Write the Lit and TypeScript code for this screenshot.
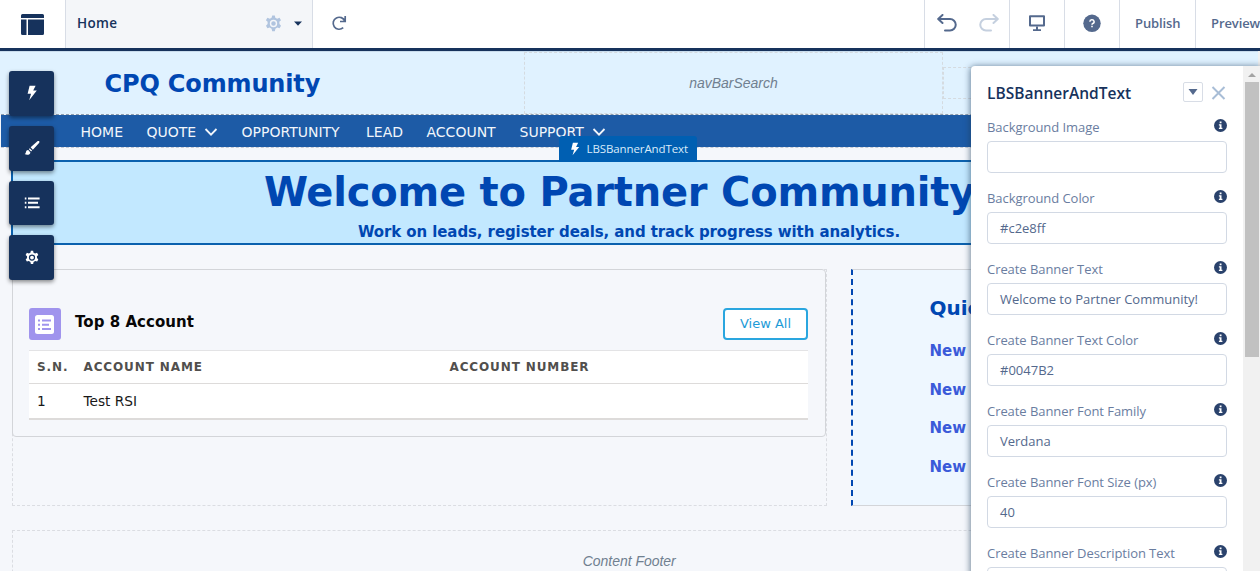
import { LitElement, html, css, svg, nothing } from "lit";
import { customElement } from "lit/decorators.js";

const GEAR = svg`<path fill-rule="evenodd" d="M8.6 1h2.8l.5 2.5 1.9.9 2.5-1 1.6 2.7-1.8 1.6.2 2.3 1.6 1.9-1.5 2.6-2.4-.7-2 1.200-.6 2.600h-2.800l-.6-2.600-2-1.200-2.400.7-1.500-2.600 1.700-1.800v-2.400l-1.800-1.600 1.600-2.700 2.500 1 1.900-.9zM10 5.600a3.900 3.900 0 1 0 0 7.800 3.900 3.900 0 0 0 0-7.800zM10 7.100a2.400 2.400 0 1 1 0 4.800 2.400 2.400 0 0 1 0-4.800z"/>`;
const BOLT = svg`<path d="M7 1h7.500l-3 6H16L6.500 19l2.300-8H4.500z"/>`;
const BRUSH = svg`<path d="M19 1.500c-.6-.6-1.500-.4-2.200.1L8.300 9.200l2.800 2.900 7.700-8.500c.6-.7.700-1.600.2-2.100zM7.200 10.300c-.5.4-.8 1-.9 1.500l2.300 2.400c.6-.1 1.100-.4 1.600-.9zM5.300 12.500c-2.200 0-2.800 1.700-3 3.200-.1 1-.6 1.500-1.500 1.900 2.300 1.600 7 1.400 7.200-2.100z"/>`;
const LIST = svg`<path d="M1 3h2v2.500H1zM5 3h14.500v2.500H5zM1 8.500h2V11H1zM5 8.500h12.500V11H5zM1 14h2v2.500H1zM5 14h14.500v2.500H5z"/>`;

const FIELDS: [string, string][] = [
  ["Background Image", ""],
  ["Background Color", "#c2e8ff"],
  ["Create Banner Text", "Welcome to Partner Community!"],
  ["Create Banner Text Color", "#0047B2"],
  ["Create Banner Font Family", "Verdana"],
  ["Create Banner Font Size (px)", "40"],
  ["Create Banner Description Text", ""],
];

@customElement("builder-header")
class BuilderHeader extends LitElement {
  static styles = css`
    :host { display: flex; height: 48px; background: #fff; color: #54698d;
      font: 600 13px/46px "Open Sans", sans-serif; border-bottom: 3px solid #16325c; box-sizing: content-box; white-space: nowrap; }
    .cell { box-sizing: border-box; height: 48px; border-left: 1px solid #d8dde6; display: flex; align-items: center; flex: none; padding-bottom: 2px; }
    .logo { width: 65px; border: 0; justify-content: center; padding-bottom: 0; padding-right: 1px; }
    .page { width: 247px; background: #f4f6f9; padding-left: 11px; color: #16325c; font-size: 13.500px; letter-spacing: .3px; border-right: 1px solid #d8dde6; width: 248px; }
    .gear { margin-left: auto; margin-right: 11px; fill: #b0c4df; }
    .caret { margin-right: 10px; }
    .reload { flex: 1; padding-left: 18px; border: 0; }
    .hist { width: 85px; padding-left: 12px; gap: 22px; }
    .icon { width: 55px; justify-content: center; }
    .pub { width: 76px; padding-left: 15px; letter-spacing: -.1px; }
    .prev { width: 65px; padding-left: 15px; letter-spacing: -.1px; }
    svg { display: block; flex: none; }
    .line { fill: none; stroke: #54698d; stroke-width: 2; stroke-linecap: round; stroke-linejoin: round; }
    .thin { stroke-width: 1.700; stroke-linecap: butt; stroke-linejoin: miter; }
    .off { stroke: #c5d0df; }
  `;
  render() {
    return html`
      <div class="cell logo"><svg width="23" height="21" viewBox="0 0 23 21" fill="#16325c"><path d="M1.500 0h20a1.500 1.500 0 0 1 1.500 1.500V4H0V1.500A1.500 1.500 0 0 1 1.500 0zM0 5.500h5.500V21h-4A1.500 1.500 0 0 1 0 19.500zM7 5.500h16v14a1.500 1.500 0 0 1-1.500 1.500H7z"/></svg></div>
      <div class="cell page">Home
        <svg class="gear" width="19" height="19" viewBox="0 0 20 19">${GEAR}</svg>
        <svg class="caret" width="8" height="5" viewBox="0 0 8 5"><path d="M0 .5h8L4 4.800z" fill="#16325c"/></svg>
      </div>
      <div class="cell reload"><svg width="16" height="16" viewBox="0 0 16 16"><path class="line thin" d="M14.200 1v5.500H9M13.800 6.200A6 6 0 1 0 12.200 12.700"/></svg></div>
      <div class="cell hist">
        <svg width="20" height="18" viewBox="0 0 20 18"><path class="line" d="M5.500 1L1.200 5l4.300 4M1.500 5H13a5.500 5.500 0 0 1 0 11.500H8"/></svg>
        <svg width="20" height="18" viewBox="0 0 20 18"><path class="line off" d="M14.500 1l4.300 4-4.300 4M18.500 5H7a5.500 5.500 0 0 0 0 11.500h5"/></svg>
      </div>
      <div class="cell icon"><svg width="18" height="18" viewBox="0 0 18 18"><path class="line" d="M2 2.200h14v9.300H2z"/><path d="M8 12.500h2v2.700h3V17H5v-1.800h3z" fill="#54698d"/></svg></div>
      <div class="cell icon"><svg width="18" height="18" viewBox="0 0 18 18"><circle cx="9" cy="9.300" r="8.700" fill="#54698d"/><path d="M6.900 7.800a2.100 1.900 0 1 1 2.900 1.700c-.6.300-.8.500-.8 1.300" fill="none" stroke="#fff" stroke-width="1.500"/><path d="M8.200 11.800h1.600v1.500H8.200z" fill="#fff"/></svg></div>
      <div class="cell pub">Publish</div>
      <div class="cell prev">Preview</div>`;
  }
}

@customElement("site-canvas")
class SiteCanvas extends LitElement {
  static styles = css`
    :host { display: block; width: 1258px; height: 520px; background: #f5f7fb; overflow: hidden; font-family: "DejaVu Sans", Verdana, sans-serif; white-space: nowrap; }
    .head { display: flex; height: 63px; background: #e0f2ff; box-sizing: border-box; border-top: 1px solid #c9dcec; }
    .brand { width: 524px; padding: 1px 0 0 104.500px; box-sizing: border-box; font: 700 24px/62px "DejaVu Sans", sans-serif; letter-spacing: -.15px; color: #0047b2; }
    .slot { font: italic 14px "Liberation Sans", sans-serif; color: #708090; text-align: center; letter-spacing: -.03px; }
    .search { box-sizing: border-box; width: 419px; border: 1px dashed #d5dbe0; line-height: 61px; }
    .user { flex: 1; height: 30px; margin-top: 15px; border: 1px dashed #d5dbe0; }
    .nav { height: 32px; margin-left: 1px; border-top: 1px dashed #8f9fae; border-bottom: 1px dashed #c5cad3; background: #1d5ba6 padding-box; display: flex; align-items: center; padding-left: 79.500px; color: #f2f6fb; font-size: 14px; }
    .nav span { display: flex; align-items: center; box-sizing: border-box; padding-top: 1px; }
    .nav svg { margin: 1px 0 0 8px; }
    .banner { position: relative; margin: 12px 11px 0; box-sizing: border-box; height: 85px; border: 2px solid #0b61ae; background: #c2e8ff; text-align: center; color: #0047b2; font-weight: 700; }
    .tag { position: absolute; left: 546px; top: -26px; width: 138px; height: 26px; box-sizing: border-box; background: #005fb2; color: #d9ebfa; border-radius: 3px 3px 0 0; font: 400 11.500px/24px "Open Sans", sans-serif; letter-spacing: -.1px; display: flex; align-items: center; padding: 0 0 1px 9px; gap: 4.500px; }
    .title { font-size: 40px; line-height: 60px; letter-spacing: -.22px; margin-left: -1px; }
    .sub { font-size: 15px; line-height: 21px; letter-spacing: -.1px; }
    .cols { display: grid; grid-template-columns: 815px 396px; gap: 24px; margin: 24px 0 0 11.500px; height: 237px; }
    .left { border: 1px dashed #dbdde2; box-sizing: border-box; }
    .card { height: 168px; box-sizing: border-box; border: 1px solid #d3d5d9; border-radius: 4px; padding: 38px 17px 0 16px; margin: -1px 0 0 -.500px; }
    .top { display: flex; align-items: center; height: 32px; }
    .ttl { font: 700 15px/28px "DejaVu Sans", sans-serif; margin: 0 auto 5px 14px; letter-spacing: .05px; color: #080707; }
    .all { box-sizing: border-box; width: 85px; height: 32px; border: 2px solid #2aa6df; border-radius: 4px; background: #fff; color: #1d9bd7; font-size: 13px; line-height: 27px; text-align: center; padding-left: 1px; }
    .row { display: grid; grid-template-columns: 46.500px 366px 1fr; background: #fff; border-bottom: 2px solid #dddbda; padding-left: 8px; height: 34px; line-height: 34px; font-size: 13.700px; color: #181818; }
    .hd { margin-top: 9.500px; height: 32px; line-height: 33px; border-top: 1px solid #e3e3e5; border-bottom-width: 1px; font-size: 12px; font-weight: 700; letter-spacing: .88px; color: #514f4d; }
    .right { box-sizing: border-box; border: 1px solid #d3d5d9; border-left: 2px dashed #0047b2; background: #eef7ff; padding: 19px 0 0 76.500px; margin-left: .5px; }
    .q { font: 700 20px/38px "DejaVu Sans", sans-serif; color: #0047b2; margin-bottom: 5px; }
    .n { font: 700 15px/38.700px "DejaVu Sans", sans-serif; color: #3a5ad9; }
    .foot { margin: 24px 11px 0 11.500px; height: 80px; border: 1px dashed #dbdde2; line-height: 61px; }
  `;
  navItem(t: string, w: number, drop = false) {
    return html`<span style="width:${w}px">${t}${drop ? html`<svg width="14" height="8" viewBox="0 0 14 8"><path d="M1.500 1L7 6.600 12.500 1" fill="none" stroke="#f2f6fb" stroke-width="1.800"/></svg>` : nothing}</span>`;
  }
  render() {
    return html`
      <div class="head"><div class="brand">CPQ Community</div><div class="slot search">navBarSearch</div><div class="user"></div></div>
      <div class="nav">
        ${this.navItem("HOME", 66)}${this.navItem("QUOTE", 95, true)}${this.navItem("OPPORTUNITY", 124.5)}${this.navItem("LEAD", 60.5)}${this.navItem("ACCOUNT", 93)}${this.navItem("SUPPORT", 100, true)}
      </div>
      <div class="banner">
        <div class="tag"><svg width="14" height="14" viewBox="0 0 20 20" fill="#fff">${BOLT}</svg>LBSBannerAndText</div>
        <div class="title">Welcome to Partner Community!</div>
        <div class="sub">Work on leads, register deals, and track progress with analytics.</div>
      </div>
      <div class="cols">
        <div class="left"><div class="card">
          <div class="top">
            <svg width="32" height="32" viewBox="0 0 32 32"><rect width="32" height="32" rx="3" fill="#a094ed"/><rect x="6" y="7" width="19" height="19" rx="2.500" fill="#fff"/><path d="M9 11.500h2v2H9zM13 11.500h9v2h-9zM9 15.800h2v2H9zM13 15.800h7v2h-7zM9 20h2v2H9zM13 20h9v2h-9z" fill="#a094ed"/></svg>
            <div class="ttl">Top 8 Account</div><div class="all">View All</div>
          </div>
          <div class="row hd"><span>S.N.</span><span>ACCOUNT NAME</span><span>ACCOUNT NUMBER</span></div>
          <div class="row"><span>1</span><span>Test RSI</span><span></span></div>
        </div></div>
        <div class="right"><div class="q">Quick</div>${[0, 1, 2, 3].map(() => html`<div class="n">New</div>`)}</div>
      </div>
      <div class="slot foot">Content Footer</div>`;
  }
}

@customElement("property-panel")
class PropertyPanel extends LitElement {
  static styles = css`
    :host { display: flex; background: #fff; border-radius: 4px 0 0 0; box-shadow: 0 1px 6px 1px rgba(30,60,90,.6); font: 13px "Open Sans", sans-serif; color: #54698d; overflow: visible; white-space: nowrap; }
    .body { flex: 1; padding: 16px 16px 0 16px; overflow: hidden; }
    .hd { display: flex; align-items: center; height: 22px; margin-bottom: 11px; }
    .name { flex: 1; font: 600 15.500px/22px "Open Sans", sans-serif; color: #16325c; letter-spacing: .03px; }
    .menu { width: 18px; height: 18px; border: 1px solid #d8dde6; border-radius: 2px; display: grid; place-items: center; margin: -2px 8px 0 0; }
    .x { margin-right: 1.500px; margin-top: -1px; }
    .f { height: 71px; }
    .lab { display: flex; justify-content: space-between; height: 26px; line-height: 24px; letter-spacing: -.06px; color: #6a7d9f; margin-bottom: -1px; }
    .lab svg { margin: 4px .500px 0 0; }
    .in { box-sizing: border-box; height: 32px; border: 1px solid #d2d9e4; border-radius: 4px; line-height: 30px; padding-left: 12px; margin-top: 1px; }
    .bar { width: 17px; background: #f1f1f1; display: flex; flex-direction: column; align-items: center; }
    .up { height: 9px; padding-top: 7px; }
    .up svg { display: block; }
    .thumb { width: 14px; height: 275px; background: #c1c1c1; }
  `;
  render() {
    return html`
      <div class="body">
        <div class="hd"><span class="name">LBSBannerAndText</span>
          <span class="menu"><svg width="10" height="6" viewBox="0 0 10 6"><path d="M.5 0h9L5 6z" fill="#54698d"/></svg></span>
          <svg class="x" width="15" height="14" viewBox="0 0 15 14"><path d="M1.500 1l12 12M13.500 1l-12 12" stroke="#a8bdd6" stroke-width="2"/></svg>
        </div>
        ${FIELDS.map(([l, v]) => html`<div class="f"><div class="lab">${l}<svg width="13" height="13" viewBox="0 0 13 13"><circle cx="6.500" cy="6.500" r="6.500" fill="#2a426c"/><path d="M5.700 2.600h1.800v1.600H5.700zM4.900 5.300h2.600v3.500h.9V10H4.900V8.800h.8V6.500h-.8z" fill="#fff"/></svg></div><div class="in">${v}</div></div>`)}
      </div>
      <div class="bar"><div class="up"><svg width="8" height="4" viewBox="0 0 8 4"><path d="M4 0l4 4H0z" fill="#a3a3a3"/></svg></div><div class="thumb"></div></div>`;
  }
}

@customElement("app-root")
class AppRoot extends LitElement {
  static styles = css`
    :host { display: block; position: relative; width: 1260px; height: 571px; overflow: hidden; background: #f1f1f1; }
    .tools { position: absolute; left: 9px; top: 71px; display: flex; flex-direction: column; gap: 10px; }
    .tool { width: 45.400px; height: 44.800px; border-radius: 3px; background: #16325c; display: grid; place-items: center; box-shadow: 0 2px 4px rgba(0,0,0,.45); }
    .tool svg { fill: #fff; }
    .panel { position: absolute; left: 971px; top: 66px; width: 289px; height: 520px; }
  `;
  render() {
    return html`
      <builder-header></builder-header>
      <site-canvas></site-canvas>
      <div class="tools">${[BOLT, BRUSH, LIST, GEAR].map((g) => html`<div class="tool"><svg width="16" height="16" viewBox="0 0 20 20">${g}</svg></div>`)}</div>
      <property-panel class="panel"></property-panel>`;
  }
}
